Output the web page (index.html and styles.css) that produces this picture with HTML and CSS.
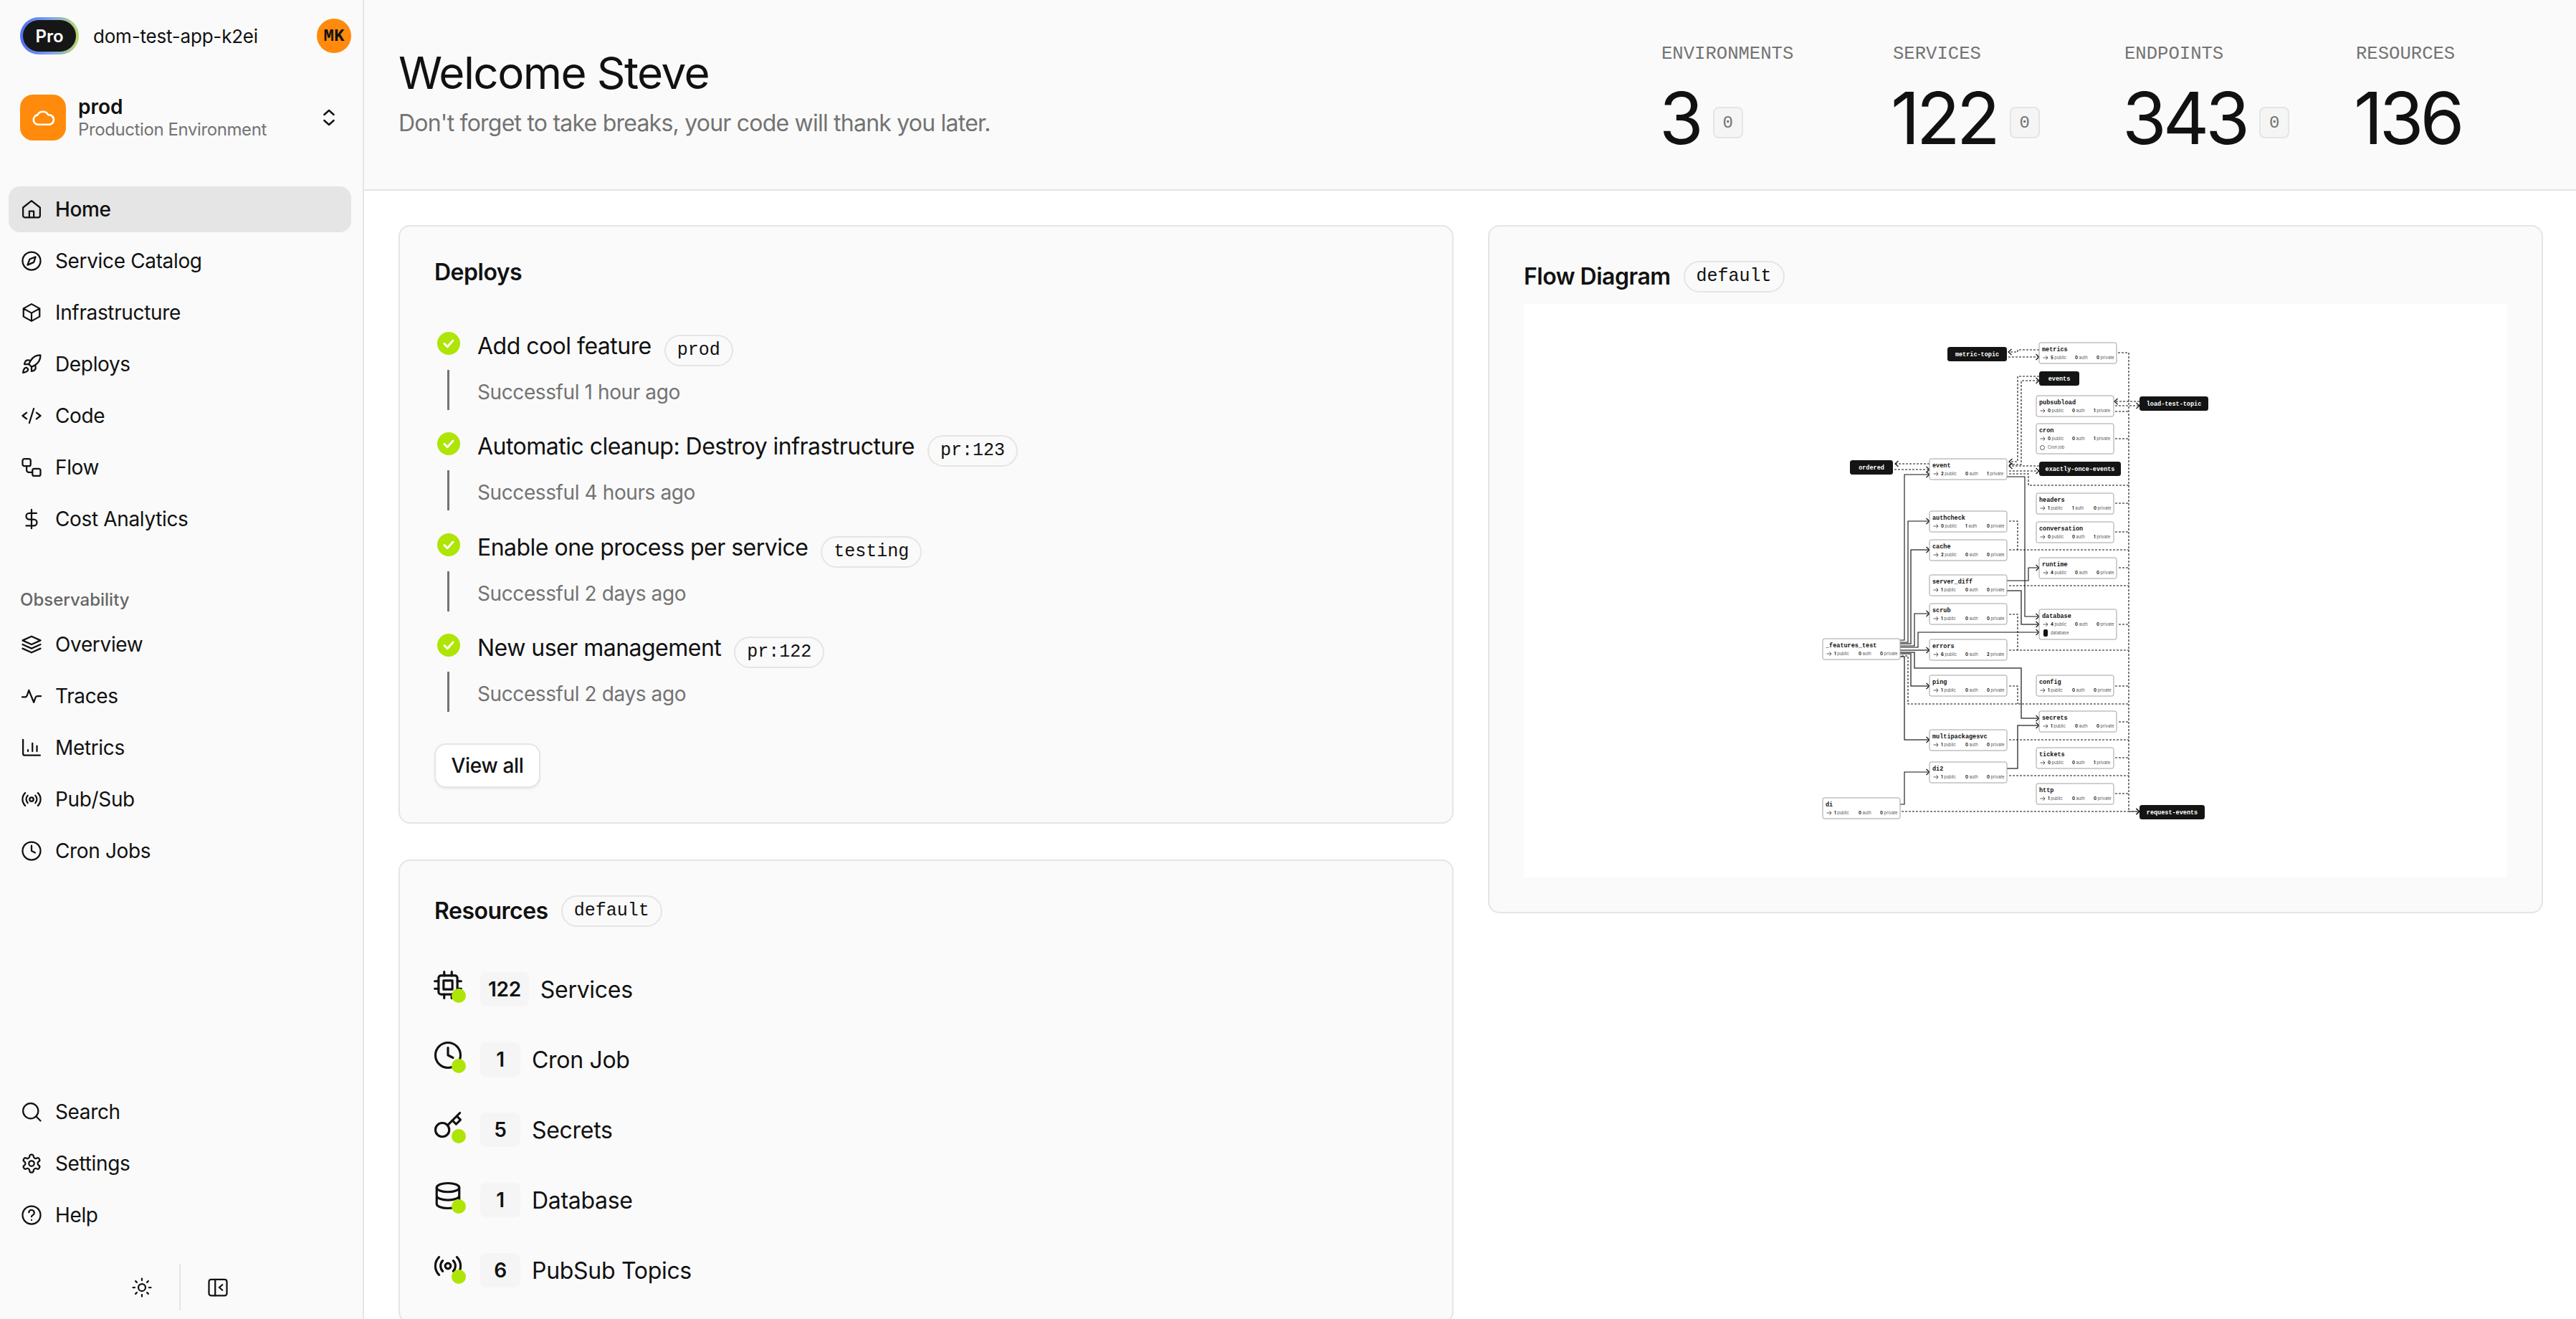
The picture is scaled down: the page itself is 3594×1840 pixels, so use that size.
FILE: index.html
```html
<!DOCTYPE html>
<html>

<head>
    <meta charset="UTF-8">
    <title>Welcome Steve</title>
    <link rel="stylesheet" href="styles.css">
</head>

<body>
    <svg class="icon-defs" width="0" height="0">
        <symbol id="i-home" viewBox="0 0 24 24"><path d="M2.5 10 12 2.5l9.5 7.5V19a2 2 0 0 1-2 2h-15a2 2 0 0 1-2-2z M9.5 21v-7h5v7" /></symbol>
        <symbol id="i-compass" viewBox="0 0 24 24"><circle cx="12" cy="12" r="10" /><path d="M16.5 7.5l-2 6-7 3 2.5-6.5z" /></symbol>
        <symbol id="i-box" viewBox="0 0 24 24"><path d="M12 2.5 21 7.5v9l-9 5-9-5v-9z M3 7.5l9 5 9-5 M12 12.5v9" /></symbol>
        <symbol id="i-rocket" viewBox="0 0 24 24"><path d="M4.5 16.5c-1.5 1.26-2 5-2 5s3.74-.5 5-2c.71-.84.7-2.13-.09-2.91a2.18 2.18 0 0 0-2.91-.09z" /><path d="m12 15-3-3a22 22 0 0 1 2-3.95A12.88 12.88 0 0 1 22 2c0 2.72-.78 7.5-6 11a22.35 22.35 0 0 1-4 2z" /><path d="M9 12H4s.55-3.03 2-4c1.62-1.08 5 0 5 0" /><path d="M12 15v5s3.03-.55 4-2c1.08-1.62 0-5 0-5" /></symbol>
        <symbol id="i-code" viewBox="0 0 24 24"><path d="M6.5 8.5 2 12l4.5 3.5 M17.5 8.5 22 12l-4.5 3.5 M14.5 4 9.5 20" /></symbol>
        <symbol id="i-flow" viewBox="0 0 24 24"><rect x="2" y="2.5" width="9" height="8" rx="2" /><rect x="13" y="13.5" width="9" height="8" rx="2" /><path d="M6.5 10.5V15a2.5 2.5 0 0 0 2.5 2.5h4" /></symbol>
        <symbol id="i-dollar" viewBox="0 0 24 24"><path d="M12 1.5v21 M17.5 5.5H9.5a3.5 3.5 0 0 0 0 7h5a3.5 3.5 0 0 1 0 7H6" /></symbol>
        <symbol id="i-layers" viewBox="0 0 24 24"><path d="M12 3 2 7.5 12 12l10-4.5z M2 12l10 4.5L22 12 M2 16.5 12 21l10-4.5" /></symbol>
        <symbol id="i-traces" viewBox="0 0 24 24"><path d="M1.5 13H5c1 0 1.6-.6 2-1.6L9 5.5l5.5 13.5 2-5.5c.3-.8.9-1.5 1.8-1.5h4.2" /></symbol>
        <symbol id="i-metrics" viewBox="0 0 24 24"><path d="M2.5 3v15.5a2 2 0 0 0 2 2h17 M8 16v-1.5 M13 16V7 M18 16v-6" /></symbol>
        <symbol id="i-radio" viewBox="0 0 24 24"><circle cx="12" cy="12" r="2.2" /><path d="M16.2 7.8a6 6 0 0 1 0 8.4 M7.8 16.2a6 6 0 0 1 0-8.4 M19.1 4.9a10 10 0 0 1 0 14.2 M4.9 19.1a10 10 0 0 1 0-14.2" /></symbol>
        <symbol id="i-clock" viewBox="0 0 24 24"><circle cx="12" cy="12" r="10" /><path d="M12 6v6l4 2" /></symbol>
        <symbol id="i-search" viewBox="0 0 24 24"><circle cx="11" cy="11" r="8.5" /><path d="m22 22-5-5" /></symbol>
        <symbol id="i-gear" viewBox="0 0 24 24"><path d="M12.22 2h-.44a2 2 0 0 0-2 2v.18a2 2 0 0 1-1 1.73l-.43.25a2 2 0 0 1-2 0l-.15-.08a2 2 0 0 0-2.73.73l-.22.38a2 2 0 0 0 .73 2.73l.15.1a2 2 0 0 1 1 1.72v.51a2 2 0 0 1-1 1.74l-.15.09a2 2 0 0 0-.73 2.73l.22.38a2 2 0 0 0 2.73.73l.15-.08a2 2 0 0 1 2 0l.43.25a2 2 0 0 1 1 1.73V20a2 2 0 0 0 2 2h.44a2 2 0 0 0 2-2v-.18a2 2 0 0 1 1-1.73l.43-.25a2 2 0 0 1 2 0l.15.08a2 2 0 0 0 2.73-.73l.22-.39a2 2 0 0 0-.73-2.73l-.15-.08a2 2 0 0 1-1-1.74v-.5a2 2 0 0 1 1-1.74l.15-.09a2 2 0 0 0 .73-2.73l-.22-.38a2 2 0 0 0-2.73-.73l-.15.08a2 2 0 0 1-2 0l-.43-.25a2 2 0 0 1-1-1.73V4a2 2 0 0 0-2-2z" /><circle cx="12" cy="12" r="3" /></symbol>
        <symbol id="i-help" viewBox="0 0 24 24"><circle cx="12" cy="12" r="10" /><path d="M9 9a3 3 0 0 1 6 .8c0 2-3 2.6-3 4 M12 17.5h.01" /></symbol>
        <symbol id="i-sun" viewBox="0 0 24 24"><circle cx="12" cy="12" r="4" /><path d="M12 2v2 M12 20v2 M4.9 4.9l1.4 1.4 M17.7 17.7l1.4 1.4 M2 12h2 M20 12h2 M6.3 17.7l-1.4 1.4 M19.1 4.9l-1.4 1.4" /></symbol>
        <symbol id="i-panel" viewBox="0 0 24 24"><rect x="2" y="3" width="20" height="18" rx="2.5" /><path d="M9 3v18 M17 9l-3.5 3 3.5 3" /></symbol>
        <symbol id="i-cloud" viewBox="0 0 24 24"><path d="M17.5 18.5H7.5a4.5 4.5 0 0 1-.7-8.9A6 6 0 0 1 12 6.5a5.5 5.5 0 0 1 4.8 3h.7a4.500 4.500 0 0 1 0 9z" /></symbol>
        <symbol id="i-updown" viewBox="0 0 24 24"><path d="M7 9l5-4.5L17 9 M7 15l5 4.5 5-4.5" /></symbol>
        <symbol id="i-chip" viewBox="0 0 24 24"><rect x="4.5" y="4.5" width="15" height="15" rx="2" /><rect x="8.5" y="8.5" width="7" height="7" /><path d="M9 1.5v3 M15 1.5v3 M9 19.5v3 M15 19.5v3 M1.5 9h3 M1.5 15h3 M19.5 9h3 M19.5 15h3" /></symbol>
        <symbol id="i-key" viewBox="0 0 24 24"><circle cx="7.5" cy="15.5" r="5.5" /><path d="m21.5 2-9.6 9.6 M15.5 8l3 3 3.5-3.5-3-3" /></symbol>
        <symbol id="i-db" viewBox="0 0 24 24"><ellipse cx="12" cy="5.5" rx="9" ry="3.5" /><path d="M3 5.5v13c0 1.9 4 3.5 9 3.5s9-1.6 9-3.5v-13 M3 12c0 1.9 4 3.5 9 3.5s9-1.6 9-3.5" /></symbol>
        <symbol id="i-check" viewBox="0 0 32 32"><circle class="check-disc" cx="16" cy="16" r="16" /><path class="check-tick" d="M10 16.5l4.2 4.2L22 12" /></symbol>
    </svg>

    <div class="app">
        <aside class="sidebar">
            <div class="app-head">
                <span class="plan"><span class="plan-inner">Pro</span></span>
                <span class="app-name">dom-test-app-k2ei</span>
                <span class="avatar">MK</span>
            </div>

            <div class="env">
                <span class="env-icon"><svg class="icon"><use href="#i-cloud" /></svg></span>
                <div class="env-text">
                    <div class="env-name">prod</div>
                    <div class="env-desc">Production Environment</div>
                </div>
                <svg class="icon env-switch"><use href="#i-updown" /></svg>
            </div>

            <nav class="nav">
                <a class="nav-item active"><svg class="icon"><use href="#i-home" /></svg>Home</a>
                <a class="nav-item"><svg class="icon"><use href="#i-compass" /></svg>Service Catalog</a>
                <a class="nav-item"><svg class="icon"><use href="#i-box" /></svg>Infrastructure</a>
                <a class="nav-item"><svg class="icon"><use href="#i-rocket" /></svg>Deploys</a>
                <a class="nav-item"><svg class="icon"><use href="#i-code" /></svg>Code</a>
                <a class="nav-item"><svg class="icon"><use href="#i-flow" /></svg>Flow</a>
                <a class="nav-item"><svg class="icon"><use href="#i-dollar" /></svg>Cost Analytics</a>
            </nav>

            <div class="nav-label">Observability</div>
            <nav class="nav">
                <a class="nav-item"><svg class="icon"><use href="#i-layers" /></svg>Overview</a>
                <a class="nav-item"><svg class="icon"><use href="#i-traces" /></svg>Traces</a>
                <a class="nav-item"><svg class="icon"><use href="#i-metrics" /></svg>Metrics</a>
                <a class="nav-item"><svg class="icon"><use href="#i-radio" /></svg>Pub/Sub</a>
                <a class="nav-item"><svg class="icon"><use href="#i-clock" /></svg>Cron Jobs</a>
            </nav>

            <nav class="nav nav-bottom">
                <a class="nav-item"><svg class="icon"><use href="#i-search" /></svg>Search</a>
                <a class="nav-item"><svg class="icon"><use href="#i-gear" /></svg>Settings</a>
                <a class="nav-item"><svg class="icon"><use href="#i-help" /></svg>Help</a>
            </nav>

            <div class="side-tools">
                <svg class="icon"><use href="#i-sun" /></svg>
                <span class="side-divider"></span>
                <svg class="icon"><use href="#i-panel" /></svg>
            </div>
        </aside>

        <main class="main">
            <header class="top">
                <div class="top-text">
                    <h1 class="top-title">Welcome Steve</h1>
                    <p class="top-sub">Don't forget to take breaks, your code will thank you later.</p>
                </div>
                <div class="stats">
                    <div class="stat">
                        <div class="stat-label">ENVIRONMENTS</div>
                        <div class="stat-row"><span class="stat-num">3</span><span class="stat-badge">0</span></div>
                    </div>
                    <div class="stat">
                        <div class="stat-label">SERVICES</div>
                        <div class="stat-row"><span class="stat-num">122</span><span class="stat-badge">0</span></div>
                    </div>
                    <div class="stat">
                        <div class="stat-label">ENDPOINTS</div>
                        <div class="stat-row"><span class="stat-num">343</span><span class="stat-badge">0</span></div>
                    </div>
                    <div class="stat">
                        <div class="stat-label">RESOURCES</div>
                        <div class="stat-row"><span class="stat-num">136</span></div>
                    </div>
                </div>
            </header>

            <div class="board">
                <div class="column">
                    <section class="card">
                        <h2 class="card-title deploys-title">Deploys</h2>
                        <ul class="deploys">
                            <li class="deploy">
                                <div class="deploy-head">
                                    <svg class="deploy-check"><use href="#i-check" /></svg>
                                    <span class="deploy-name">Add cool feature</span>
                                    <span class="tag">prod</span>
                                </div>
                                <div class="deploy-foot"><span class="deploy-line"></span><span class="deploy-time">Successful 1 hour ago</span></div>
                            </li>
                            <li class="deploy">
                                <div class="deploy-head">
                                    <svg class="deploy-check"><use href="#i-check" /></svg>
                                    <span class="deploy-name">Automatic cleanup: Destroy infrastructure</span>
                                    <span class="tag">pr:123</span>
                                </div>
                                <div class="deploy-foot"><span class="deploy-line"></span><span class="deploy-time">Successful 4 hours ago</span></div>
                            </li>
                            <li class="deploy">
                                <div class="deploy-head">
                                    <svg class="deploy-check"><use href="#i-check" /></svg>
                                    <span class="deploy-name">Enable one process per service</span>
                                    <span class="tag">testing</span>
                                </div>
                                <div class="deploy-foot"><span class="deploy-line"></span><span class="deploy-time">Successful 2 days ago</span></div>
                            </li>
                            <li class="deploy">
                                <div class="deploy-head">
                                    <svg class="deploy-check"><use href="#i-check" /></svg>
                                    <span class="deploy-name">New user management</span>
                                    <span class="tag">pr:122</span>
                                </div>
                                <div class="deploy-foot"><span class="deploy-line"></span><span class="deploy-time">Successful 2 days ago</span></div>
                            </li>
                        </ul>
                        <button class="btn" type="button">View all</button>
                    </section>

                    <section class="card card-resources">
                        <div class="card-head">
                            <h2 class="card-title">Resources</h2>
                            <span class="tag">default</span>
                        </div>
                        <ul class="resources">
                            <li class="resource">
                                <span class="res-icon"><svg class="icon"><use href="#i-chip" /></svg><i class="res-dot"></i></span>
                                <span class="res-count">122</span>Services
                            </li>
                            <li class="resource">
                                <span class="res-icon"><svg class="icon"><use href="#i-clock" /></svg><i class="res-dot"></i></span>
                                <span class="res-count">1</span>Cron Job
                            </li>
                            <li class="resource">
                                <span class="res-icon"><svg class="icon"><use href="#i-key" /></svg><i class="res-dot"></i></span>
                                <span class="res-count">5</span>Secrets
                            </li>
                            <li class="resource">
                                <span class="res-icon"><svg class="icon"><use href="#i-db" /></svg><i class="res-dot"></i></span>
                                <span class="res-count">1</span>Database
                            </li>
                            <li class="resource">
                                <span class="res-icon"><svg class="icon"><use href="#i-radio" /></svg><i class="res-dot"></i></span>
                                <span class="res-count">6</span>PubSub Topics
                            </li>
                        </ul>
                    </section>
                </div>

                <div class="column">
                    <section class="card">
                        <div class="card-head">
                            <h2 class="card-title">Flow Diagram</h2>
                            <span class="tag">default</span>
                        </div>
                        <div class="flow">
                            <svg id="flow-svg" class="flow-svg" viewBox="2126 424 1372 800">
                                <defs>
                                    <marker id="arrow" markerUnits="userSpaceOnUse" markerWidth="10" markerHeight="10" refX="7" refY="5" orient="auto">
                                        <path d="M2.5 1 7 5 2.5 9" fill="none" stroke="#111" stroke-width="1.2" />
                                    </marker>
                                </defs>
                            </svg>
                        </div>
                    </section>
                </div>
            </div>
        </main>
    </div>
    <script src="script.js"></script>
</body>

</html>
```

FILE: styles.css
```css
* {
    margin: 0;
    padding: 0;
    box-sizing: border-box;
    list-style: none;
}

body {
    font-family: "Inter", "Liberation Sans", sans-serif;
    color: #111;
    background: #fff;
    overflow: hidden;
}

.icon-defs {
    position: absolute;
}

.icon {
    width: 30px;
    height: 30px;
    flex: none;
    fill: none;
    stroke: currentColor;
    stroke-width: 1.8;
    stroke-linecap: round;
    stroke-linejoin: round;
}

.app {
    display: flex;
    height: 100vh;
}

/* sidebar */
.sidebar {
    width: 508px;
    flex: none;
    display: flex;
    flex-direction: column;
    padding: 24px 16px 12px 12px;
    background: #fafafa;
    border-right: 2px solid #e5e5e5;
}

.app-head {
    display: flex;
    align-items: center;
    height: 52px;
    padding-left: 16px;
}

.plan {
    width: 82px;
    height: 52px;
    padding: 4px;
    border-radius: 26px;
    background: linear-gradient(90deg, #4f6ff5 0%, #7aa0ee 50%, #b9d96c 100%);
}

.plan-inner {
    display: flex;
    align-items: center;
    justify-content: center;
    height: 100%;
    border-radius: 22px;
    background: #161616;
    color: #fff;
    font-size: 24px;
    font-weight: 600;
}

.app-name {
    margin-left: 20px;
    font-size: 26px;
    letter-spacing: -0.2px;
}

.avatar {
    display: flex;
    align-items: center;
    justify-content: center;
    width: 48px;
    height: 48px;
    margin-left: auto;
    border-radius: 50%;
    background: #ff8a0c;
    font-family: "Liberation Mono", monospace;
    font-size: 24px;
    font-weight: 700;
}

.env {
    display: flex;
    align-items: center;
    height: 64px;
    margin-top: 56px;
    padding-left: 16px;
}

.env-icon {
    display: flex;
    align-items: center;
    justify-content: center;
    width: 64px;
    height: 64px;
    border-radius: 18px;
    background: #ff8a0c;
    color: #fff;
}

.env-icon .icon {
    width: 36px;
    height: 36px;
}

.env-text {
    margin-left: 17px;
}

.env-name {
    font-size: 28px;
    font-weight: 600;
    line-height: 34px;
}

.env-desc {
    font-size: 24px;
    line-height: 30px;
    letter-spacing: -0.4px;
    color: #737373;
}

.env-switch {
    width: 32px;
    height: 32px;
    margin-left: auto;
    margin-right: 15px;
}

.nav {
    display: flex;
    flex-direction: column;
    gap: 8px;
    margin-top: 64px;
}

.nav-item {
    display: flex;
    align-items: center;
    gap: 18px;
    height: 64px;
    padding-left: 17px;
    border-radius: 16px;
    font-size: 28px;
    letter-spacing: -0.35px;
}

.nav-item.active {
    background: #e5e5e5;
    font-weight: 500;
}

.nav-label {
    margin-top: 66px;
    padding-left: 16px;
    font-size: 24px;
    font-weight: 500;
    line-height: 30px;
    color: #666;
}

.nav-label + .nav {
    margin-top: 15px;
}

.nav-bottom {
    margin-top: auto;
}

.side-tools {
    display: flex;
    align-items: center;
    justify-content: center;
    gap: 37px;
    height: 64px;
    margin-top: 37px;
}

.side-divider {
    width: 2px;
    height: 64px;
    background: #e5e5e5;
}

/* header */
.main {
    flex: 1;
    min-width: 0;
    display: flex;
    flex-direction: column;
}

.top {
    display: flex;
    justify-content: space-between;
    height: 266px;
    flex: none;
    padding: 0 48px;
    background: #fafafa;
    border-bottom: 2px solid #e5e5e5;
}

.top-text {
    padding-top: 64px;
}

.top-title {
    font-size: 62px;
    font-weight: 400;
    line-height: 76px;
    letter-spacing: -1.6px;
}

.top-sub {
    margin-top: 12px;
    font-size: 32px;
    line-height: 40px;
    letter-spacing: -0.78px;
    color: #737373;
}

.stats {
    display: grid;
    grid-template-columns: repeat(4, 259px);
    gap: 64px;
    padding-top: 60px;
}

.stat-label {
    font-family: "Liberation Mono", monospace;
    font-size: 25.6px;
    line-height: 32px;
    color: #737373;
}

.stat-row {
    display: flex;
    align-items: center;
    gap: 18px;
    height: 116px;
    margin-top: 15px;
}

.stat-num {
    margin-left: -3px;
    font-size: 100px;
    line-height: 116px;
    letter-spacing: -5px;
}

.stat-badge {
    display: flex;
    align-items: center;
    justify-content: center;
    width: 42px;
    height: 44px;
    margin-top: 12px;
    border: 2px solid #e5e5e5;
    border-radius: 8px;
    background: #f5f5f5;
    font-family: "Liberation Mono", monospace;
    font-size: 24px;
    color: #737373;
}

/* cards */
.board {
    display: grid;
    grid-template-columns: 1472px 1472px;
    gap: 48px;
    align-items: start;
    padding: 48px;
}

.column {
    display: flex;
    flex-direction: column;
    gap: 50px;
}

.card {
    padding: 48px;
    border: 2px solid #e5e5e5;
    border-radius: 16px;
    background: #fafafa;
}

.card-head {
    display: flex;
    align-items: center;
    gap: 18px;
    height: 44px;
}

.card-title {
    font-size: 32px;
    font-weight: 600;
    line-height: 32px;
    letter-spacing: -0.5px;
}

.tag {
    flex: none;
    height: 44px;
    padding: 0 16px;
    border: 2px solid #e5e5e5;
    border-radius: 22px;
    font-family: "Liberation Mono", monospace;
    font-size: 25px;
    line-height: 40px;
}

/* deploys */
.deploys {
    margin-top: 67px;
}

.deploy {
    height: 140.3px;
}

.deploy-head {
    display: flex;
    align-items: flex-start;
}

.deploy-check {
    width: 32px;
    height: 32px;
    flex: none;
    margin: 0 24px 0 4px;
}

.check-disc {
    fill: #aee506;
}

.check-tick {
    fill: none;
    stroke: #fff;
    stroke-width: 3;
    stroke-linecap: round;
    stroke-linejoin: round;
}

.deploy-name {
    margin-right: 18px;
    font-size: 32px;
    line-height: 40px;
    letter-spacing: -0.52px;
}

.deploy-head .tag {
    margin-top: 4px;
}

.deploy-foot {
    display: flex;
    align-items: center;
    height: 56px;
    margin-top: 5px;
}

.deploy-line {
    width: 3px;
    height: 56px;
    margin: 0 39px 0 18px;
    background: #737373;
}

.deploy-time {
    margin-top: 6px;
    font-size: 28px;
    letter-spacing: -0.4px;
    color: #737373;
}

.btn {
    display: block;
    height: 62px;
    width: 148px;
    margin-top: 13px;
    border: 2px solid #e5e5e5;
    border-radius: 16px;
    background: #fff;
    box-shadow: 0 2px 3px rgba(0, 0, 0, 0.06);
    font-family: inherit;
    font-size: 28px;
    font-weight: 500;
    letter-spacing: -0.3px;
    color: #111;
}

/* resources */
.resources {
    display: flex;
    flex-direction: column;
    gap: 50px;
    margin-top: 63px;
}

.resource {
    display: flex;
    align-items: center;
    height: 48px;
    font-size: 32px;
    letter-spacing: -0.3px;
}

.res-icon {
    position: relative;
    width: 38px;
    height: 38px;
    margin-right: 26px;
}

.res-icon .icon {
    display: block;
    width: 42px;
    height: 42px;
    margin: -8px 0 0 -2px;
}

.res-dot {
    position: absolute;
    right: -6px;
    bottom: 0;
    width: 20px;
    height: 20px;
    border-radius: 50%;
    background: #aee506;
}

.res-count {
    min-width: 56px;
    height: 48px;
    margin-right: 16px;
    padding: 0 11px;
    border-radius: 8px;
    background: #f5f5f5;
    font-size: 28px;
    font-weight: 600;
    line-height: 48px;
    text-align: center;
}

/* flow diagram */
.flow {
    margin-top: 16px;
    height: 800px;
    background: #fff;
}

.flow-svg {
    display: block;
    width: 100%;
    height: 100%;
}

.edge {
    fill: none;
    stroke: #111;
    stroke-width: 1.1;
}

.edge-soft {
    stroke: #444;
    stroke-width: 1.5;
}

.edge-dash {
    stroke-dasharray: 3 2;
}

.node-box {
    fill: #fff;
    stroke: #a0a0a0;
    stroke-width: 1;
}

.node-name {
    font-family: "Liberation Mono", monospace;
    font-size: 8.5px;
    font-weight: 700;
    fill: #111;
}

.node-stat {
    font-family: "Inter", "Liberation Sans", sans-serif;
    font-size: 5.8px;
    fill: #555;
}

.node-stat tspan {
    font-weight: 700;
    fill: #111;
}

.node-icon {
    fill: none;
    stroke: #111;
    stroke-width: 0.7;
}

.node-db {
    fill: #111;
}

.topic-box {
    fill: #141414;
}

.topic-name {
    font-family: "Liberation Mono", monospace;
    font-size: 8.5px;
    font-weight: 700;
    fill: #fff;
    text-anchor: middle;
}
```

FILE: script.js
```js
// flow diagram data, coordinates are those of the viewBox
var A = 2543, B = 2692, C = 2841, D = 2845;

// name, x, y, height, public, auth, private, extra row
var services = [
    ['metrics', D, 478, 29, 5, 0, 0],
    ['pubsubload', C, 552, 29, 0, 0, 1],
    ['cron', C, 591, 42, 0, 0, 1, 'Cron job'],
    ['event', B, 640, 29, 2, 0, 1],
    ['headers', C, 688, 29, 1, 1, 0],
    ['authcheck', B, 713, 29, 0, 1, 0],
    ['conversation', C, 728, 29, 0, 0, 1],
    ['cache', B, 753, 29, 2, 0, 0],
    ['runtime', D, 778, 29, 4, 0, 0],
    ['server_diff', B, 802, 29, 1, 0, 0],
    ['scrub', B, 842, 29, 1, 0, 0],
    ['database', D, 850, 42, 4, 0, 0, 'database'],
    ['_features_test', A, 891, 29, 1, 0, 0],
    ['errors', B, 892, 29, 6, 0, 2],
    ['ping', B, 942, 29, 1, 0, 0],
    ['config', C, 942, 29, 1, 0, 0],
    ['secrets', D, 992, 29, 1, 0, 0],
    ['multipackagesvc', B, 1018, 29, 1, 0, 0],
    ['tickets', C, 1043, 29, 0, 0, 1],
    ['di2', B, 1063, 29, 1, 0, 0],
    ['http', C, 1093, 29, 1, 0, 0],
    ['di', A, 1113, 29, 1, 0, 0]
];

// name, x, y, width
var topics = [
    ['metric-topic', 2717, 484, 83],
    ['events', 2845, 518, 56],
    ['load-test-topic', 2985, 553, 96],
    ['ordered', 2581, 642, 60],
    ['exactly-once-events', 2845, 644, 114],
    ['request-events', 2985, 1123, 91]
];

// path, arrow at the end, soft (grey and thicker)
var solid = [
    ['M2651 893H2657V662H2692', 1],
    ['M2651 896H2662V727H2692', 1],
    ['M2651 898H2666V767H2692', 1, 1],
    ['M2651 901H2671V856H2692', 1],
    ['M2651 903H2676V882H2845', 1],
    ['M2651 907H2692', 1, 1],
    ['M2651 910H2671V932H2820V1002H2845', 1, 1],
    ['M2651 912H2666V957H2692', 1, 1],
    ['M2651 916H2657V1032H2692', 1, 1],
    ['M2651 1122H2657V1077H2692', 1],
    ['M2800 1072H2815V1012H2845', 1, 1],
    ['M2800 665H2825V860H2845', 1],
    ['M2800 810H2830V792H2845', 1],
    ['M2800 824H2820V871H2845', 1, 1]
];

var dashed = [
    ['M2845 488H2815V491H2802', 1],
    ['M2802 498H2845', 1],
    ['M2955 492H2970'],
    ['M2845 525H2815V644H2803', 1],
    ['M2803 648H2820V531H2845', 1],
    ['M2845 650H2803', 1],
    ['M2803 657H2845', 1],
    ['M2692 647H2644', 1],
    ['M2643 655H2692', 1],
    ['M2803 661H2830V677H2970'],
    ['M2985 560H2950', 1],
    ['M2951 566H2985', 1],
    ['M2951 574H2970'],
    ['M2951 612H2970'],
    ['M2951 702H2970'],
    ['M2951 742H2970'],
    ['M2803 727H2815V767'],
    ['M2803 767H2970'],
    ['M2956 792H2970'],
    ['M2803 817H2970'],
    ['M2803 857H2815V907'],
    ['M2803 907H2970'],
    ['M2956 871H2970'],
    ['M2803 957H2815V982'],
    ['M2653 915H2662V982H2970'],
    ['M2951 957H2970'],
    ['M2956 1007H2970'],
    ['M2803 1032H2970'],
    ['M2951 1057H2970'],
    ['M2803 1082H2970'],
    ['M2951 1107H2970'],
    ['M2970 492V1132H2985', 1],
    ['M2653 1132H2985', 1]
];

var svg = document.getElementById('flow-svg');
var NS = 'http://www.w3.org/2000/svg';

var add = function (parent, tag, attrs, text) {
    var el = document.createElementNS(NS, tag);
    for (var key in attrs) {
        el.setAttribute(key, attrs[key]);
    }
    if (text !== undefined) {
        el.textContent = text;
    }
    parent.appendChild(el);
    return el;
};

var addEdge = function (item, className) {
    var attrs = { d: item[0], 'class': className + (item[2] ? ' edge-soft' : '') };
    if (item[1]) {
        attrs['marker-end'] = 'url(#arrow)';
    }
    add(svg, 'path', attrs);
};

var addStat = function (group, x, y, value, label) {
    var text = add(group, 'text', { x: x, y: y, 'class': 'node-stat' });
    add(text, 'tspan', {}, value);
    text.appendChild(document.createTextNode(' ' + label));
};

solid.forEach(function (item) {
    addEdge(item, 'edge');
});
dashed.forEach(function (item) {
    addEdge(item, 'edge edge-dash');
});

services.forEach(function (node) {
    var x = node[1], y = node[2];
    var group = add(svg, 'g', {});
    add(group, 'rect', { x: x, y: y, width: 108, height: node[3], rx: 2.5, 'class': 'node-box' });
    add(group, 'text', { x: x + 4, y: y + 12, 'class': 'node-name' }, node[0]);
    add(group, 'path', { d: 'M' + (x + 5.5) + ' ' + (y + 21) + 'h6.5m-2.5-2.8 2.5 2.8-2.5 2.8', 'class': 'node-icon' });
    addStat(group, x + 16, y + 23, node[4], 'public');
    addStat(group, x + 50, y + 23, node[5], 'auth');
    addStat(group, x + 80, y + 23, node[6], 'private');
    if (node[7] === 'Cron job') {
        add(group, 'circle', { cx: x + 8.5, cy: y + 33.5, r: 3, 'class': 'node-icon' });
    }
    if (node[7] === 'database') {
        add(group, 'rect', { x: x + 6, y: y + 28, width: 6, height: 10, rx: 2, 'class': 'node-db' });
    }
    if (node[7]) {
        add(group, 'text', { x: x + 16, y: y + 35, 'class': 'node-stat' }, node[7]);
    }
});

topics.forEach(function (topic) {
    var group = add(svg, 'g', {});
    add(group, 'rect', { x: topic[1], y: topic[2], width: topic[3], height: 20, rx: 3.5, 'class': 'topic-box' });
    add(group, 'text', { x: topic[1] + topic[3] / 2, y: topic[2] + 13, 'class': 'topic-name' }, topic[0]);
});
```
